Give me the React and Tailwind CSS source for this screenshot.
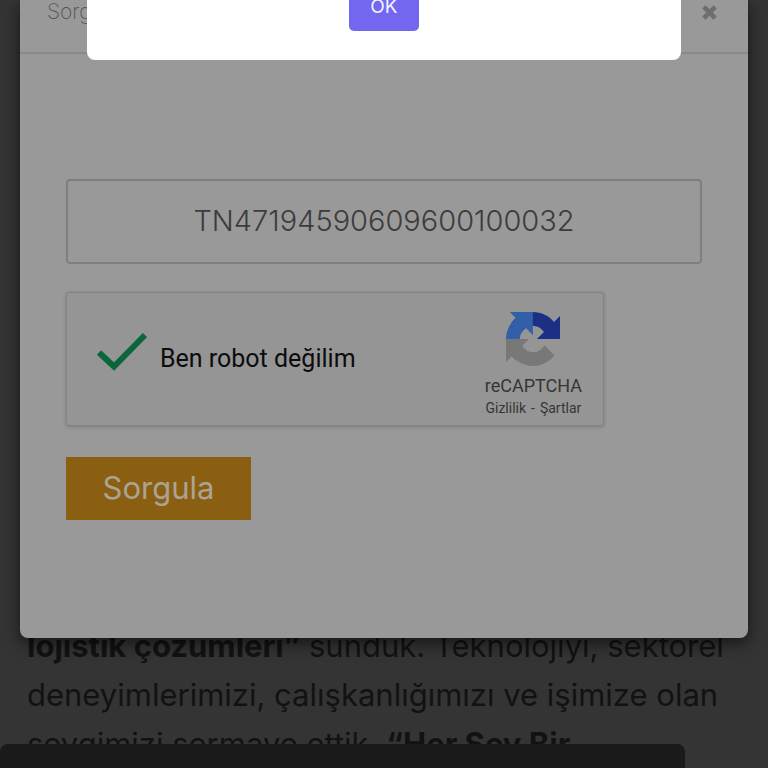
import React, { useState } from "react";

function RecaptchaLogo() {
  return (
    <svg className="w-[54px] h-[54px]" viewBox="0 0 64 64" aria-hidden="true">
      <path fill="#1b2f84" d="M64 31.955l-.033-1.37V4.687l-7.16 7.16C50.948 4.674 42.033.093 32.05.093c-10.4 0-19.622 4.96-25.458 12.64l11.736 11.86a15.55 15.55 0 0 1 4.754-5.334c2.05-1.6 4.952-2.906 8.968-2.906.485 0 .86.057 1.135.163 4.976.393 9.288 3.14 11.828 7.124l-8.307 8.307L64 31.953" />
      <path fill="#315fa8" d="M31.862.094l-1.37.033H4.594l7.16 7.16C4.58 13.147 0 22.06 0 32.046c0 10.4 4.96 19.622 12.64 25.458L24.5 45.768a15.55 15.55 0 0 1-5.334-4.754c-1.6-2.05-2.906-4.952-2.906-8.968 0-.485.057-.86.163-1.135.393-4.976 3.14-9.288 7.124-11.828l8.307 8.307L31.86.095" />
      <path fill="#787878" d="M.001 32.045l.033 1.37v25.898l7.16-7.16c5.86 7.173 14.774 11.754 24.76 11.754 10.4 0 19.622-4.96 25.458-12.64l-11.736-11.86a15.55 15.55 0 0 1-4.754 5.334c-2.05 1.6-4.952 2.906-8.968 2.906-.485 0-.86-.057-1.135-.163-4.976-.393-9.288-3.14-11.828-7.124l8.307-8.307c-10.522.04-22.4.066-27.295-.005" />
    </svg>
  );
}

function Recaptcha() {
  const [checked, setChecked] = useState(true);

  return (
    <div className="mt-7 flex h-[134px] w-full max-w-[538px] items-center justify-between rounded-[3px] border border-[#828282] bg-[#959595] pl-[29px] pr-[21px] font-[Roboto,sans-serif] shadow-[0_1px_3px_1px_rgba(0,0,0,0.12)]">
      <label htmlFor="robot" className="flex items-center gap-3">
        <span className="relative -mt-3 h-[42px] w-[52px]">
          <input
            id="robot"
            type="checkbox"
            checked={checked}
            onChange={(e) => setChecked(e.target.checked)}
            className="absolute inset-0 h-full w-full appearance-none"
          />
          {checked && (
            <svg className="pointer-events-none absolute inset-0" width="52" height="42" viewBox="0 0 52 42" fill="none" stroke="#0b663c" strokeWidth="6">
              <path d="M3 20.5L18 34.5L49 3" />
            </svg>
          )}
        </span>
        <span className="text-[25px] leading-8 text-[#0c0c0c]">Ben robot değilim</span>
      </label>
      <div className="flex flex-col items-center pt-3 text-[#353535]">
        <RecaptchaLogo />
        <span className="mt-2 text-[18px] leading-6">reCAPTCHA</span>
        <span className="text-[14px] leading-5">
          <a href="#gizlilik">Gizlilik</a>
          <span className="px-[5px]">-</span>
          <a href="#sartlar">Şartlar</a>
        </span>
      </div>
    </div>
  );
}

function QueryModal() {
  const [code, setCode] = useState("TN47194590609600100032");

  return (
    <div className="absolute inset-x-5 top-0 rounded-b-[8px] bg-[#999999] shadow-[0_5px_16px_rgba(0,0,0,0.6)]">
      <div className="flex h-[54px] items-start justify-between border-b-2 border-[#8a8a8a] pl-[27px] pr-[31px]">
        <h2 className="text-[21px] font-extralight leading-6 text-[#555555]">Sorgula</h2>
        <button type="button" aria-label="Kapat" className="pt-[5px]">
          <svg width="15" height="15" viewBox="0 0 16 16" stroke="#6e6e6e" strokeWidth="5">
            <path d="M2 2L14 14M14 2L2 14" />
          </svg>
        </button>
      </div>
      <form className="px-[46px] pb-[118px] pt-[125px]" onSubmit={(e) => e.preventDefault()}>
        <input
          type="text"
          aria-label="Takip numarası"
          value={code}
          onChange={(e) => setCode(e.target.value)}
          className="block h-[85px] w-full rounded-[4px] border-2 border-[#7f7f7f] bg-[#999999] pb-[2px] text-center text-[29px] font-light text-[#3c3c3c] outline-none"
        />
        <Recaptcha />
        <button type="submit" className="mt-[31px] h-[63px] w-[185px] bg-[#8b5f12] text-[31px] text-[#aba394]">
          Sorgula
        </button>
      </form>
    </div>
  );
}

export default function App() {
  return (
    <div className="relative flex min-h-screen items-end overflow-hidden bg-[#343434] font-[Inter,sans-serif]">
      <p className="whitespace-nowrap pl-[27px] text-[31px] leading-[49px] text-[#121212]">
        <strong className="font-bold">lojistik çözümleri”</strong> sunduk. Teknolojiyi, sektörel
        <br />
        deneyimlerimizi, çalışkanlığımızı ve işimize olan
        <br />
        sevgimizi sermaye ettik. <strong className="font-bold">“Her Şey Bir</strong>
      </p>

      <QueryModal />

      {/* Alert */}
      <div role="alertdialog" aria-label="Uyarı" className="absolute inset-x-[87px] top-0 flex h-[60px] items-end justify-center rounded-b-[8px] bg-white pb-[29px]">
        <button type="button" className="h-[50px] w-[70px] shrink-0 rounded-[5px] bg-[#7367f0] text-[19px] leading-none text-[#f3f1ff]">
          OK
        </button>
      </div>

      {/* Bottom bar */}
      <div className="absolute bottom-0 left-0 right-[83px] h-6 rounded-t-[8px] bg-[#1a1a1a]" />
    </div>
  );
}
